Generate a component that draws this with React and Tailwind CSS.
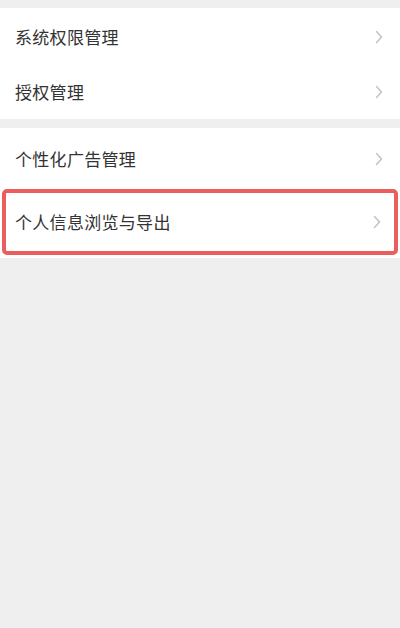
import React from "react";

const Chevron = () => (
  <svg width="8" height="14" viewBox="0 0 8 14" fill="none" className="flex-shrink-0">
    <path d="M1.5 1.5 L6.5 7 L1.5 12.5" stroke="#c4c4c4" strokeWidth="1.6" strokeLinecap="round" strokeLinejoin="round" />
  </svg>
);

function Row({ label, height }) {
  return (
    <div className={`flex items-center justify-between pl-[15px] pr-[17px] ${height}`}>
      <span className="text-[17px] text-[#333] tracking-[0.3px]">{label}</span>
      <Chevron />
    </div>
  );
}

export default function App() {
  return (
    <div
      className="w-[400px] h-[628px] bg-[#efefef] pt-[8px]"
      style={{ fontFamily: '"Noto Sans CJK SC", "Noto Sans", sans-serif' }}
    >
      <div className="bg-white">
        <Row label="系统权限管理" height="h-[57px]" />
        <Row label="授权管理" height="h-[54px]" />
      </div>
      <div className="bg-white mt-[9px] pb-[3px]">
        <Row label="个性化广告管理" height="h-[61px]" />
        <div className="mx-[2px] border-4 border-[#ec5e5e] rounded-[5px]">
          <div className="flex items-center justify-between pl-[9px] pr-[13px] h-[58px]">
            <span className="text-[17px] text-[#333] tracking-[0.3px]">个人信息浏览与导出</span>
            <Chevron />
          </div>
        </div>
      </div>
    </div>
  );
}
